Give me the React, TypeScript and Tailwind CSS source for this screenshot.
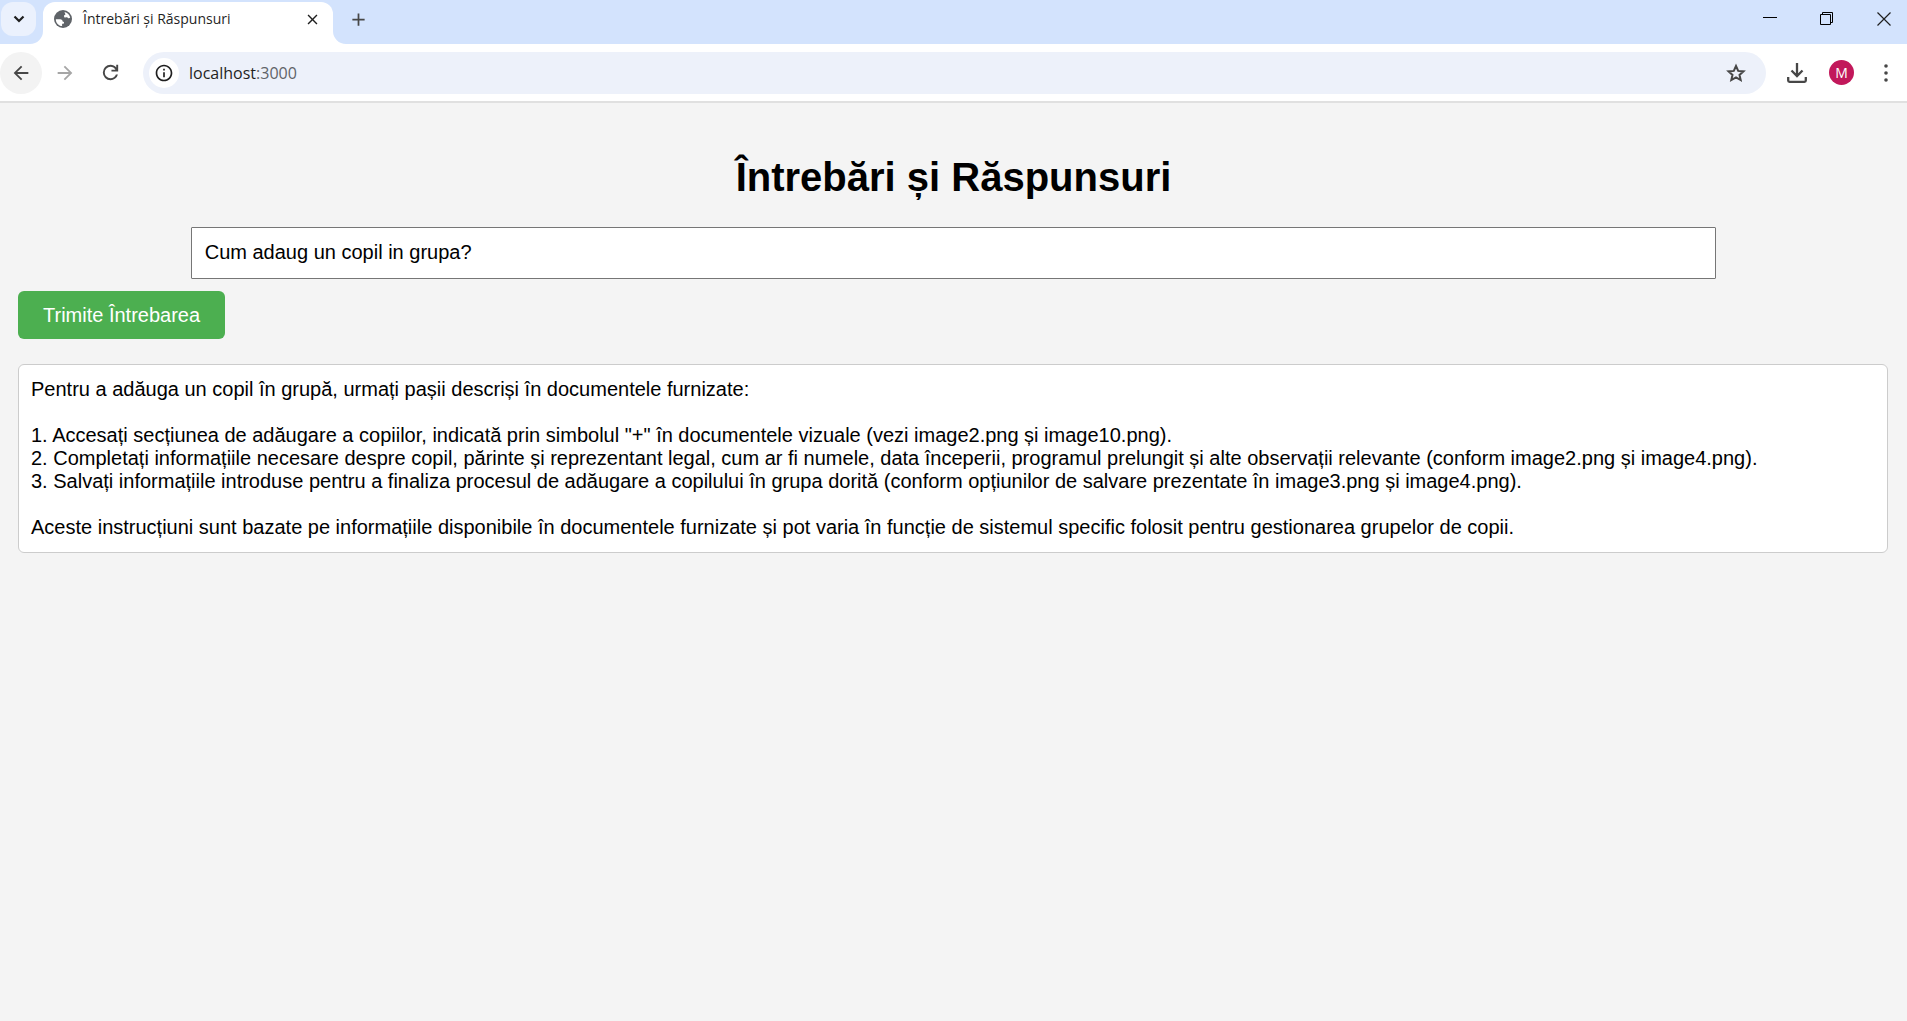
import React from "react";
import { MdArrowBack, MdArrowForward, MdClose, MdAdd, MdInfoOutline } from "react-icons/md";

function Globe() {
  return (
    <svg viewBox="0 0 18 18" className="size-[18px] shrink-0" aria-hidden="true">
      <circle cx="9" cy="9" r="9" fill="#5f6368" />
      <path
        d="M1.800 9.200h4.400c1.600.1 2.400 1 2.400 2.200 1.200.1 1.600.6 1.400 1.500-.2.700-1 .9-1.900.9v2.300C4.600 15.700 1.800 13 1.800 9.200z"
        fill="#fff"
      />
      <path
        d="M10.600 2c2.900.600 5.100 2.900 5.600 5.600-.7.700-1.500.9-2.300.3-.5-.5-1.200-.6-2-.5-1 .1-1.800-.4-1.900-1.200-.1-.8.5-1.300 1.300-1.400.4-1-.8-1.700-.7-2.800z"
        fill="#fff"
      />
    </svg>
  );
}

function TabBar() {
  return (
    <header className="flex h-11 items-stretch bg-[#d3e3fd] text-[#1f1f1f]">
      <button
        aria-label="Caută file"
        className="mt-0.5 ml-px flex h-[34px] w-[35px] items-center justify-center rounded-xl bg-[#ebf1fd]"
      >
        <svg viewBox="0 0 12 8" className="h-2 w-3" aria-hidden="true">
          <path d="M1.500 1.500 6 6l4.500-4.500" fill="none" stroke="#1f1f1f" strokeWidth="2.200" />
        </svg>
      </button>
      <div className="relative mt-0.5 ml-[7px] flex w-[290px] items-center rounded-t-xl bg-white pr-3 pb-2 pl-[11px]">
        <svg viewBox="0 0 13 13" className="absolute bottom-0 -left-[13px] size-[13px]" aria-hidden="true">
          <path d="M13 0v13H0A13 13 0 0 0 13 0z" fill="#fff" />
        </svg>
        <svg viewBox="0 0 13 13" className="absolute -right-[13px] bottom-0 size-[13px]" aria-hidden="true">
          <path d="M0 0v13h13A13 13 0 0 1 0 0z" fill="#fff" />
        </svg>
        <Globe />
        <span className="ml-[11px] flex-1 text-sm whitespace-nowrap">Întrebări și Răspunsuri</span>
        <button aria-label="Închide fila">
          <MdClose className="size-[17px]" />
        </button>
      </div>
      <button aria-label="Filă nouă" className="ml-[15px] self-center pb-1.5">
        <MdAdd className="size-[21px] text-[#474747]" />
      </button>
      <div className="ml-auto flex items-center gap-[43px] pr-4 pb-[7px]">
        <button aria-label="Minimizează">
          <svg viewBox="0 0 14 14" className="size-3.5" aria-hidden="true">
            <path d="M0 5.500h14" stroke="#000" fill="none" />
          </svg>
        </button>
        <button aria-label="Restaurează">
          <svg viewBox="0 0 14 14" className="size-3.5" aria-hidden="true">
            <path d="M.5 2.500h10v10H.5zM2.500 2V.5h10v10H11" stroke="#000" fill="none" />
          </svg>
        </button>
        <button aria-label="Închide">
          <svg viewBox="0 0 14 14" className="size-3.5" aria-hidden="true">
            <path d="M.5.5l13 13M13.500.5l-13 13" stroke="#1f1f1f" strokeWidth="1.200" fill="none" />
          </svg>
        </button>
      </div>
    </header>
  );
}

function Toolbar() {
  return (
    <nav className="flex h-[59px] items-center border-b-2 border-[#e0e0e0] bg-white text-[#474747]">
      <button aria-label="Înapoi" className="flex h-[42px] w-[42px] items-center justify-center rounded-full bg-[#f3f3f3]">
        <MdArrowBack className="size-[22px]" />
      </button>
      <button aria-label="Înainte" className="ml-3 text-[#a6a6a6]">
        <MdArrowForward className="size-[22px]" />
      </button>
      <button aria-label="Reîncarcă" className="ml-[23px]">
        <svg viewBox="0 -960 960 960" className="size-[23px]" fill="currentColor" aria-hidden="true">
          <path d="M480-160q-134 0-227-93t-93-227q0-134 93-227t227-93q69 0 132 28.500T720-690v-110h80v280H520v-80h168q-32-56-87.500-88T480-720q-100 0-170 70t-70 170q0 100 70 170t170 70q77 0 139-44t87-116h84q-28 106-114 173t-196 67Z" />
        </svg>
      </button>
      <div className="ml-[21px] flex h-[42px] flex-1 items-center rounded-full bg-[#edf1fa] pr-[19px] pl-1.5">
        <button aria-label="Informații despre site" className="flex size-[30px] items-center justify-center rounded-full bg-white">
          <MdInfoOutline className="size-5 text-[#1f1f1f]" />
        </button>
        <div className="ml-2.5 flex-1 text-base text-[#1f1f1f]">
          localhost<span className="text-[#5f6368]">:3000</span>
        </div>
        <button aria-label="Marchează pagina">
          <svg viewBox="0 0 22 22" className="size-[22px]" fill="none" stroke="currentColor" strokeWidth="2" aria-hidden="true">
            <path d="M11 4l2.200 4.900 5.300.5-4 3.500 1.200 5.200L11 15.400l-4.700 2.700 1.200-5.200-4-3.500 5.300-.5z" />
          </svg>
        </button>
      </div>
      <button aria-label="Descărcări" className="ml-[21px]">
        <svg viewBox="0 0 20 20" className="size-5" aria-hidden="true" fill="none" stroke="#474747" strokeWidth="2.300">
          <path d="M10 0v13M4.500 7.500l5.500 5.500 5.500-5.500M1.200 14v3.500q0 1.300 1.300 1.300h15q1.300 0 1.300-1.300V14" />
        </svg>
      </button>
      <button
        aria-label="Profil"
        className="ml-[22px] flex size-[25px] items-center justify-center rounded-full bg-[#c2185b] text-sm text-white"
      >
        M
      </button>
      <button aria-label="Meniu" className="mr-[9px] ml-5">
        <svg viewBox="0 0 24 24" className="size-6" fill="currentColor" aria-hidden="true">
          <circle cx="12" cy="5" r="1.800" />
          <circle cx="12" cy="12" r="1.800" />
          <circle cx="12" cy="19" r="1.800" />
        </svg>
      </button>
    </nav>
  );
}

const answer = `Pentru a adăuga un copil în grupă, urmați pașii descriși în documentele furnizate:

1. Accesați secțiunea de adăugare a copiilor, indicată prin simbolul "+" în documentele vizuale (vezi image2.png și image10.png).
2. Completați informațiile necesare despre copil, părinte și reprezentant legal, cum ar fi numele, data începerii, programul prelungit și alte observații relevante (conform image2.png și image4.png).
3. Salvați informațiile introduse pentru a finaliza procesul de adăugare a copilului în grupa dorită (conform opțiunilor de salvare prezentate în image3.png și image4.png).

Aceste instrucțiuni sunt bazate pe informațiile disponibile în documentele furnizate și pot varia în funcție de sistemul specific folosit pentru gestionarea grupelor de copii.`;

export default function App() {
  return (
    <div className="flex min-h-screen flex-col bg-[#f4f4f4]">
      <div className="font-['Open_Sans',sans-serif]">
        <TabBar />
        <Toolbar />
      </div>
      <main className="pt-[51px] font-['Liberation_Sans',Arial,sans-serif] text-xl leading-[23px] text-black">
        <h1 className="text-center text-[40px] leading-[46px] font-bold">Întrebări și Răspunsuri</h1>
        <input
          aria-label="Întrebare"
          defaultValue="Cum adaug un copil in grupa?"
          className="mx-auto mt-[27px] block h-[52px] w-4/5 rounded-[1px] border border-[#767676] bg-white px-[13px] pb-0.5"
        />
        <form className="pr-[19px] pl-[18px]" onSubmit={(e) => e.preventDefault()}>
          <button className="mt-3 block h-12 rounded-md bg-[#4caf50] px-[25px] text-white">Trimite Întrebarea</button>
          <div className="mt-[25px] rounded-md border border-[#ccc] bg-white px-3 py-[13px] whitespace-pre-wrap">{answer}</div>
        </form>
      </main>
    </div>
  );
}
